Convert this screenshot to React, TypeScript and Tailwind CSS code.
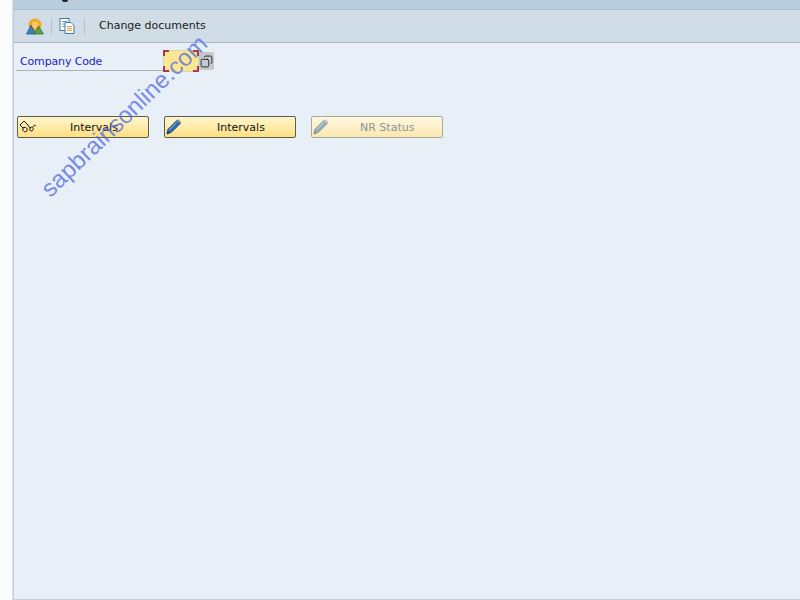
import React from 'react';
import { Copy } from 'lucide-react';

const font = "font-['DejaVu_Sans',sans-serif]";

const Glasses = () => (
  <svg width="18" height="16" viewBox="0 0 18 16" fill="none" stroke="#111" strokeWidth="1">
    <path d="M1 6 L5 2 M1 6 L4 9 M4 9 C3 12 6 14 8 12 C9 10 7 7 4 9 M8 5 L5 2 M8 5 L11 9 M11 9 C10 12 13 13 14 11 C15 9 13 7 11 9 M14 8 C15 6 16 6 17 7" />
  </svg>
);

const Pencil = ({ faded }: { faded?: boolean }) => (
  <svg width="15" height="16" viewBox="0 0 16 17" className={faded ? 'opacity-50' : ''}>
    <path d="M1 16 L2 11 L11 2 L15 5 L6 14 Z" fill="#2f6fb0" stroke="#1c3f70" strokeWidth="0.8" />
    <path d="M11 2 L13 0.8 L15.5 3 L15 5 Z" fill="#8fb4d8" stroke="#1c3f70" strokeWidth="0.6" />
    <path d="M3.5 11.5 L11.5 3.5" stroke="#8cc0ea" strokeWidth="1" />
    <path d="M1 16 L2 13 L4 15 Z" fill="#16263f" />
  </svg>
);

const SapButton = ({ icon, label, disabled, labelClass }: { icon: React.ReactNode; label: string; disabled?: boolean; labelClass: string }) => (
  <div
    className={`relative flex h-[22px] w-[132px] items-center rounded-[2px] border bg-gradient-to-b ${
      disabled
        ? 'border-[#a8a89c] from-[#fdf8e0] to-[#fbe8b0] text-[#8f9498]'
        : 'border-[#5c5c50] from-[#fef6cc] to-[#fddf80] text-[#111]'
    }`}
  >
    <span className="ml-[1px] flex w-[20px] items-center">{icon}</span>
    <span className={`text-[11px] leading-none ${labelClass}`}>{label}</span>
  </div>
);

export default function App() {
  return (
    <div className={`relative flex h-[600px] w-[800px] overflow-hidden bg-white ${font}`}>
      <div className="h-full w-[13px] border-r border-[#d8e0e6] bg-[#fbfcfd]" />

      <div className="flex h-full flex-1 flex-col border-l border-[#c4d0da]">
        <div className="relative h-[10px] border-b border-[#a9bccb] bg-[#b9cddd]">
          <div className="absolute left-[48px] top-0 h-[2px] w-[6px] rounded-b bg-[#222]" />
        </div>

        <div className="flex h-[33px] items-center border-b border-[#a8b6c0] bg-[#d0dde6]">
          <svg width="18" height="17" viewBox="0 0 18 17" className="ml-[12px]">
            <circle cx="9" cy="7" r="6.5" fill="#f5a623" />
            <circle cx="9" cy="7" r="3.5" fill="#fbc858" />
            <path d="M0.5 16 L5 7 L9.5 16 Z" fill="#3f7fb8" stroke="#22507e" strokeWidth="0.7" />
            <path d="M8 16 L12.5 8 L17.5 16 Z" fill="#5aa04a" stroke="#2f6a2a" strokeWidth="0.7" />
          </svg>
          <div className="ml-[7px] h-[16px] w-px bg-[#b4c2cc]" />
          <svg width="16" height="16" viewBox="0 0 16 16" className="ml-[7px]">
            <rect x="1" y="0.5" width="9" height="12" fill="#fff" stroke="#3c78a8" />
            <path d="M3 3.5h5M3 6h5M3 8.5h3" stroke="#7a93a8" strokeWidth="1" />
            <path d="M6 4.5h6l3 3v8H6Z" fill="#fff" stroke="#3c78a8" />
            <path d="M8 8.5h5M8 10.5h5M8 12.5h5" stroke="#f0a030" strokeWidth="1" />
          </svg>
          <div className="ml-[9px] h-[16px] w-px bg-[#b4c2cc]" />
          <span className="ml-[14px] pt-px text-[11px] text-[#1a1a1a]">Change documents</span>
        </div>

        <div className="flex-1 border-b border-[#c8d2da] bg-[#e8eff6] pl-[2px]">
          <div className="mt-[7px] flex h-[22px] items-start">
            <div className="flex h-[21px] w-[147px] items-center border-b border-[#a9b2b8] pl-[4px] pt-[5px] text-[11px] tracking-[-0.15px] text-[#1a1acc]">
              Company Code
            </div>
            <div className="relative h-[22px] w-[36px] border border-[#d8d4b0] bg-[#fbe792]">
              <span className="absolute -left-px -top-px h-[6px] w-[6px] border-l-2 border-t-2 border-[#a83a50]" />
              <span className="absolute -right-px -top-px h-[6px] w-[6px] border-r-2 border-t-2 border-[#a83a50]" />
              <span className="absolute -bottom-px -left-px h-[6px] w-[6px] border-b-2 border-l-2 border-[#a83a50]" />
              <span className="absolute -bottom-px -right-px h-[6px] w-[6px] border-b-2 border-r-2 border-[#a83a50]" />
            </div>
            <div className="mt-[2px] flex h-[18px] w-[15px] items-center justify-center rounded-r-[2px] bg-[#c3c9ce]">
              <Copy size={13} strokeWidth={1.5} className="-scale-x-100 text-[#111]" />
            </div>
          </div>

          <div className="ml-[1px] mt-[44px] flex gap-[15px]">
            <SapButton icon={<Glasses />} label="Intervals" labelClass="ml-[31px]" />
            <SapButton icon={<Pencil />} label="Intervals" labelClass="ml-[31px]" />
            <SapButton icon={<Pencil faded />} label="NR Status" disabled labelClass="ml-[27px]" />
          </div>
        </div>
      </div>

      <span className="absolute left-[14px] top-[104px] origin-center -rotate-[44deg] font-['Liberation_Sans',sans-serif] text-[24px] leading-none whitespace-nowrap text-[#5a6fe0]/80">
        sapbrainsonline.com
      </span>
    </div>
  );
}
